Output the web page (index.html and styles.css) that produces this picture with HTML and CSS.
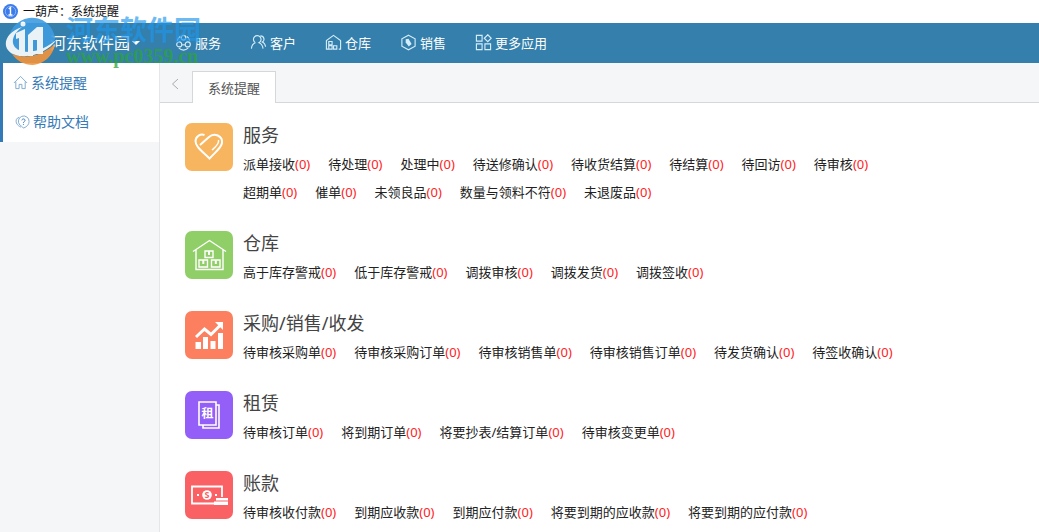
FILE: index.html
```html
<!DOCTYPE html>
<html lang="zh-CN">
<head>
<meta charset="utf-8">
<title>一葫芦：系统提醒</title>
<link rel="stylesheet" href="styles.css">
</head>
<body>
<div class="titlebar">
  <svg class="app-icon" viewBox="0 0 15 15"><circle class="disc" cx="7.5" cy="7.5" r="7.5"/><circle class="ring" cx="7.5" cy="7.5" r="5.2"/><path class="one" d="M5.8 5 7.500 3.500v7.500M5.500 11h4"/></svg>
  <span>一葫芦<span class="colon">：</span>系统提醒</span>
</div>
<header class="header">
  <button class="brand" type="button">河东软件园<span class="caret"></span></button>
  <nav class="nav">
    <a href="#"><svg viewBox="0 0 18 18"><path d="M2.500 7a6.500 6.500 0 0 1 3-4.500M15.500 7a6.500 6.500 0 0 0-3-4.500M4 15c3 2.500 7 2.500 10 0"/><circle cx="9" cy="4" r="2.500"/><circle cx="4.500" cy="11" r="2.700"/><circle cx="13.500" cy="11" r="2.700"/><path d="M7.500 11.500h3"/></svg>服务</a>
    <a href="#"><svg viewBox="0 0 18 18"><path d="M1.500 15.500c.2-3.200 2-5.500 4.200-6.300M5.700 9.200a4 4 0 1 1 3.800.1c2.500 1 4 3 4.300 6.200M11 2c3.800-.2 5.200 4.800 2 6.500 2 .8 3.200 2.800 3.500 5"/></svg>客户</a>
    <a href="#"><svg viewBox="0 0 18 18"><path d="M3.500 16H1.500V7L9 1.500 16.500 7v9h-2M4 8h3.500v3.500H4zM4 12.500h3.500V16H4zM9 12.500h3.500V16H9z"/></svg>仓库</a>
    <a href="#"><svg viewBox="0 0 18 18"><path d="m9 1.200 7 3.900v7.800l-7 3.900-7-3.900V5.100z"/><path class="solid" d="M6 5.500 9 5l3.300 5.500-3 2.700L6 9z"/></svg>销售</a>
    <a href="#"><svg viewBox="0 0 18 18"><path d="M1.500 1.500h6v6h-6zM1.500 10.500h6v6h-6zM10.500 10.500h6v6h-6zM13.500.8l3.700 3.700-3.700 3.700-3.700-3.700z"/></svg>更多应用</a>
  </nav>
</header>
<div class="body">
  <aside class="sidebar">
    <nav class="menu">
      <a href="#"><svg viewBox="0 0 16 16"><path d="M1 8.500 8 1.500l7 7M3 7v7.500h3.500V10h3v4.500H13V7"/></svg>系统提醒</a>
      <a href="#" class="help"><svg viewBox="0 0 16 16"><path d="M4.500 2.500C1.500 3 .5 6 1.500 8.500c1 2.500 3 3.500 5 4.500M9 14c4-1.500 6-4 6-7A5.700 5.700 0 1 0 5.200 10.700C6.200 11.700 8 12.200 9 14z"/><path class="mark" d="M7.300 5.700c.2-2.200 3.700-1.800 3.400.2-.2 1-1.700 1.100-1.700 2.600M9 9.500v1"/></svg>帮助文档</a>
    </nav>
  </aside>
  <main class="main">
    <div class="tabs">
      <button class="back" type="button" aria-label="向左"><svg viewBox="0 0 8 12"><path d="M7 1 1.500 6 7 11"/></svg></button>
      <button class="tab" type="button">系统提醒</button>
    </div>
    <div class="content">
      <section class="group">
        <svg class="tile orange" viewBox="0 0 48 48"><path d="m15 22 9-8c5-5 14-1 13 6-.6 4.500-5 7.500-12.500 15.500C17 28 10.500 24 10.500 18c.3-5 5-7.500 9-6" stroke-width="2"/><path d="M33.500 17c1 4-3 7-6.500 10" stroke-width="1.500"/></svg>
        <div class="detail"><h2>服务</h2>
          <div class="links"><a href="#">派单接收<b>(0)</b></a><a href="#">待处理<b>(0)</b></a><a href="#">处理中<b>(0)</b></a><a href="#">待送修确认<b>(0)</b></a><a href="#">待收货结算<b>(0)</b></a><a href="#">待结算<b>(0)</b></a><a href="#">待回访<b>(0)</b></a><a href="#">待审核<b>(0)</b></a></div>
          <div class="links"><a href="#">超期单<b>(0)</b></a><a href="#">催单<b>(0)</b></a><a href="#">未领良品<b>(0)</b></a><a href="#">数量与领料不符<b>(0)</b></a><a href="#">未退废品<b>(0)</b></a></div>
        </div>
      </section>
      <section class="group">
        <svg class="tile green" viewBox="0 0 48 48"><path d="M8 20.500 24.500 9.500 41 20.500M11 19v19.500h27V19M20 20h8v6.500h-8zM14 29h8.500v7H14zM26.500 29H35v7h-8.500z" stroke-width="1.400"/><path d="M24 20v4M18.300 29v4M30.800 29v4" stroke-width="2"/></svg>
        <div class="detail"><h2>仓库</h2>
          <div class="links"><a href="#">高于库存警戒<b>(0)</b></a><a href="#">低于库存警戒<b>(0)</b></a><a href="#">调拨审核<b>(0)</b></a><a href="#">调拨发货<b>(0)</b></a><a href="#">调拨签收<b>(0)</b></a></div>
        </div>
      </section>
      <section class="group">
        <svg class="tile coral" viewBox="0 0 48 48"><path d="m11 26 8.500-8 6.500 5.500L35.500 14" stroke-width="3"/><path class="solid" d="M30 11h8v8zM10.500 31h5.500v7h-5.500zM18 26h5v12h-5zM25.500 30h5v8h-5zM33 22h5v16h-5z"/></svg>
        <div class="detail"><h2>采购/销售/收发</h2>
          <div class="links"><a href="#">待审核采购单<b>(0)</b></a><a href="#">待审核采购订单<b>(0)</b></a><a href="#">待审核销售单<b>(0)</b></a><a href="#">待审核销售订单<b>(0)</b></a><a href="#">待发货确认<b>(0)</b></a><a href="#">待签收确认<b>(0)</b></a></div>
        </div>
      </section>
      <section class="group">
        <svg class="tile purple" viewBox="0 0 48 48"><path d="M14 11h17v23H14zM31 14h3v23H18v-3" stroke-width="1.600"/><text x="22.500" y="27" font-size="12">租</text></svg>
        <div class="detail"><h2>租赁</h2>
          <div class="links"><a href="#">待审核订单<b>(0)</b></a><a href="#">将到期订单<b>(0)</b></a><a href="#">将要抄表/结算订单<b>(0)</b></a><a href="#">待审核变更单<b>(0)</b></a></div>
        </div>
      </section>
      <section class="group">
        <svg class="tile red" viewBox="0 0 48 48"><path d="M29 32.500H7v-17h30V26" stroke-width="1.800"/><circle class="solid" cx="22" cy="24" r="4.800"/><text class="coin" x="22" y="27" font-size="9">S</text><path class="solid" d="M12 23h2v2h-2zM30 23h2v2h-2zM31 27h12v2.500H31zM29 30.500h14V34H29z"/></svg>
        <div class="detail"><h2>账款</h2>
          <div class="links"><a href="#">待审核收付款<b>(0)</b></a><a href="#">到期应收款<b>(0)</b></a><a href="#">到期应付款<b>(0)</b></a><a href="#">将要到期的应收款<b>(0)</b></a><a href="#">将要到期的应付款<b>(0)</b></a></div>
        </div>
      </section>
    </div>
  </main>
</div>
<svg class="watermark" viewBox="0 0 210 75" aria-hidden="true">
  <g class="wm-logo">
    <path fill="#3f9ce0" d="M9 44a23 23 0 0 1 46-6c0 12-34 20-46 6z"/>
    <path fill="#f2953c" d="M12 54c16 6 32 0 43-10-2 12-11 20-22 21-9 0-16-4-21-11z"/>
    <path fill="#fff" d="M22 27C4 33 1 48 13 54c14 6 35-1 44-15-9 9-25 15-36 12-12-4-10-16 1-24z"/>
    <path fill="#fff" d="m16 33 9-4v27h-6V38l-3 1zM28 35l9-8h6v27h-6V40h-4v16h-5z"/>
    <circle fill="#fff" cx="23" cy="24" r="2.500"/>
  </g>
  <text class="wm-name" x="66" y="40">河东软件园</text>
  <text class="wm-url" x="66" y="63">www.pc0359.cn</text>
</svg>
</body>
</html>
```
FILE: styles.css
```css
* { box-sizing: border-box; }
body {
  margin: 0;
  min-height: 100vh;
  display: flex;
  flex-direction: column;
  font: 13px/20px "Noto Sans", "Noto Sans CJK SC", sans-serif;
  color: #222;
  background: #fff;
}
a { color: inherit; text-decoration: none; white-space: nowrap; }
button { font: inherit; border: 0; background: none; padding: 0; }
svg path, svg circle { fill: none; stroke: currentColor; }
svg .solid { fill: currentColor; stroke: none; }

.titlebar { height: 23px; display: flex; align-items: center; gap: 5px; padding-left: 3px; font-size: 12px; color: #111; }
.colon { font-family: "Noto Sans CJK TC", sans-serif; }
.app-icon { width: 15px; height: 15px; }
.app-icon .disc { fill: #3b7bea; stroke: none; }
.app-icon .ring { stroke: #a9c8fb; stroke-width: 0.7; }
.app-icon .one { stroke: #fff; stroke-width: 1.4; }

.header { height: 40px; display: flex; align-items: center; background: #347fab; color: #fff; }
.brand { display: flex; align-items: center; gap: 2px; padding-left: 50px; width: 175px; font-size: 16px; color: #fff; }
.caret { border: 4px solid transparent; border-top-color: #fff; border-bottom: 0; }
.nav { display: flex; gap: 29px; padding-bottom: 1px; }
.nav a { display: flex; align-items: center; gap: 3px; }
.nav svg { width: 17px; height: 17px; color: #d5edfa; stroke-width: 1.2; }

.body { flex: 1; display: flex; }
.sidebar { flex: 0 0 160px; background: #f5f6f8; border-right: 1px solid #e4e6e8; }
.menu { background: #fff; border-left: 3px solid #347ab7; color: #347ab7; }
.menu a { display: flex; align-items: center; gap: 3px; height: 39px; padding-left: 10px; font-size: 14px; }
.menu svg { width: 15px; height: 15px; color: #7da9cf; }
.menu .help { height: 40px; padding-left: 12px; }
.menu .mark { stroke: #347ab7; }

.main { flex: 1; min-width: 0; }
.tabs { height: 40px; display: flex; align-items: flex-end; background: #f5f6f8; border-bottom: 1px solid #d5d8db; }
.back { width: 32px; height: 36px; padding-right: 2px; display: grid; place-items: center; color: #aaa; }
.back svg { width: 8px; height: 12px; }
.tab { height: 32px; margin-bottom: -1px; padding: 0 15px; border: 1px solid #d5d8db; border-bottom: 0; background: #fff; color: #555; }

.content { padding: 20px 25px 0; display: flex; flex-direction: column; gap: 25px; }
.group { display: flex; gap: 10px; }
.tile { flex: none; width: 48px; height: 48px; border-radius: 7px; color: #fff; }
.tile text { fill: #fff; font-weight: bold; text-anchor: middle; }
.tile .coin { fill: #fa6164; }
.orange { background: #f8b55f; }
.green { background: #90ce67; }
.coral { background: #fc7f5f; }
.purple { background: #935ff8; }
.red { background: #fa6164; }
h2 { margin: 0 0 3px; font-size: 18px; line-height: 24px; font-weight: 400; color: #444; }
.links { display: flex; gap: 18px; line-height: 28px; color: #222; }
.links b { font-weight: 400; color: #f22; }

.watermark { position: absolute; left: 0; top: 0; width: 210px; height: 75px; pointer-events: none; }
.wm-logo { opacity: 0.9; }
.wm-logo path, .wm-logo circle { stroke: none; fill: revert-layer; }
.wm-name { font: bold 27px "Noto Sans CJK SC", sans-serif; fill: #1e96ec; opacity: 0.65; }
.wm-url { font: bold 20px "Liberation Serif", serif; fill: #2da33c; opacity: 0.75; }
```
